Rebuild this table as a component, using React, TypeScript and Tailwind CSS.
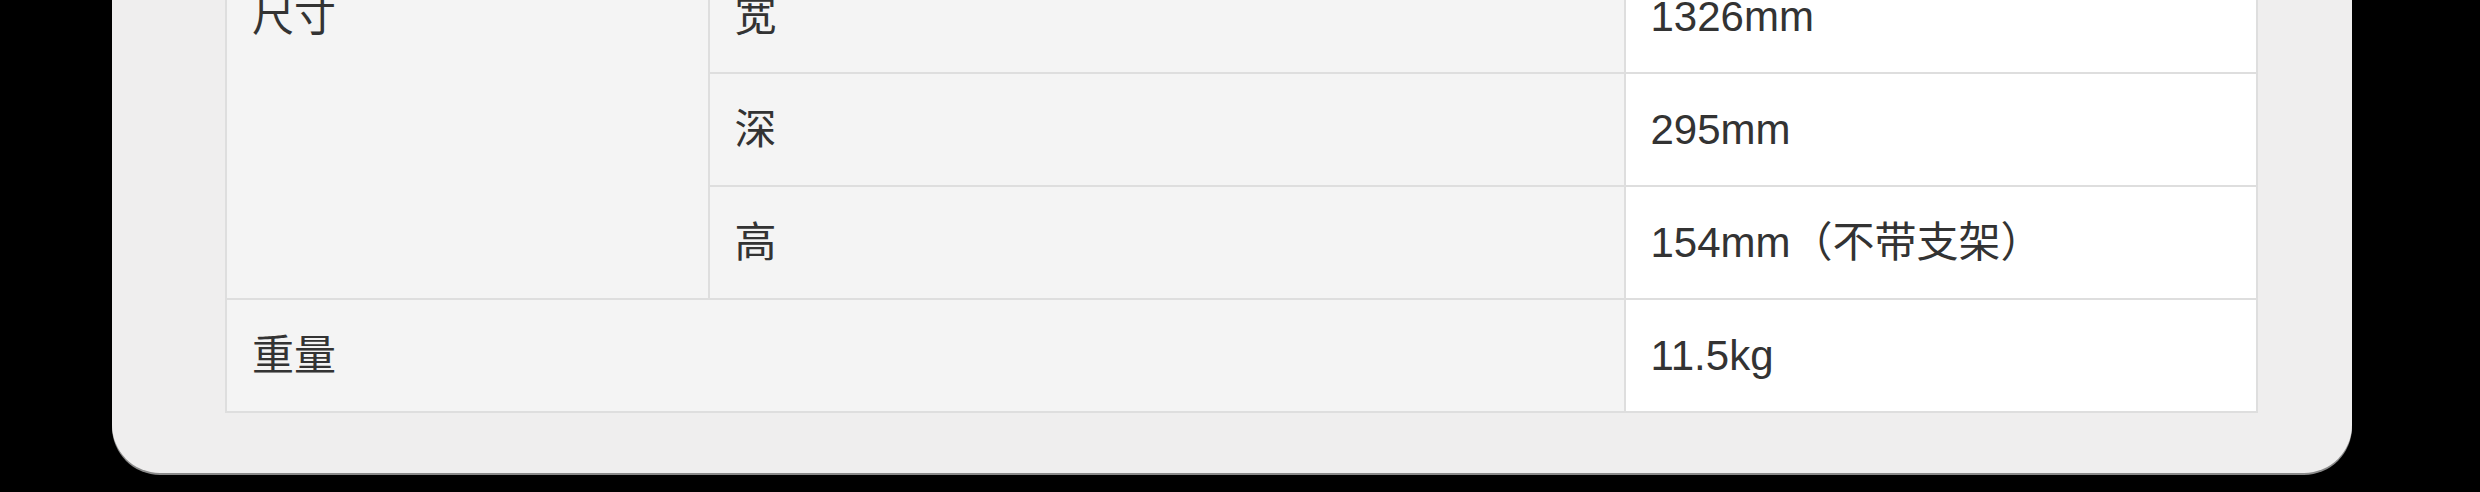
import React from "react";

const cellBase = "border-2 border-[#dedede] px-[25px] text-[42px] leading-[50px] text-[#333333] font-normal text-left";

export default function App() {
  return (
    <div
      className="h-[492px] w-[2480px] overflow-hidden bg-black"
      style={{ fontFamily: '"Liberation Sans", Arial, "Noto Sans CJK SC", sans-serif' }}
    >
      <div className="ml-[112px] -mt-[100px] w-[2240px] rounded-b-[48px] bg-[#efeeee] pl-[113px] pr-[94px] pt-[59px] pb-[60px] shadow-[0_2px_0_#8a8a8a]">
        <table className="w-[2033px] border-collapse">
          <colgroup>
            <col className="w-[483px]" />
            <col className="w-[917px]" />
            <col className="w-[633px]" />
          </colgroup>
          <tbody>
            <tr className="h-[113px]">
              <td rowSpan={3} className={`${cellBase} bg-[#f4f4f4] align-top pt-[31px]`}>尺寸</td>
              <td className={`${cellBase} bg-[#f4f4f4]`}>宽</td>
              <td className={`${cellBase} bg-white`}>1326mm</td>
            </tr>
            <tr className="h-[113px]">
              <td className={`${cellBase} bg-[#f4f4f4]`}>深</td>
              <td className={`${cellBase} bg-white`}>295mm</td>
            </tr>
            <tr className="h-[113px]">
              <td className={`${cellBase} bg-[#f4f4f4]`}>高</td>
              <td className={`${cellBase} bg-white`}>154mm（不带支架）</td>
            </tr>
            <tr className="h-[113px]">
              <td colSpan={2} className={`${cellBase} bg-[#f4f4f4]`}>重量</td>
              <td className={`${cellBase} bg-white`}>11.5kg</td>
            </tr>
          </tbody>
        </table>
      </div>
    </div>
  );
}
